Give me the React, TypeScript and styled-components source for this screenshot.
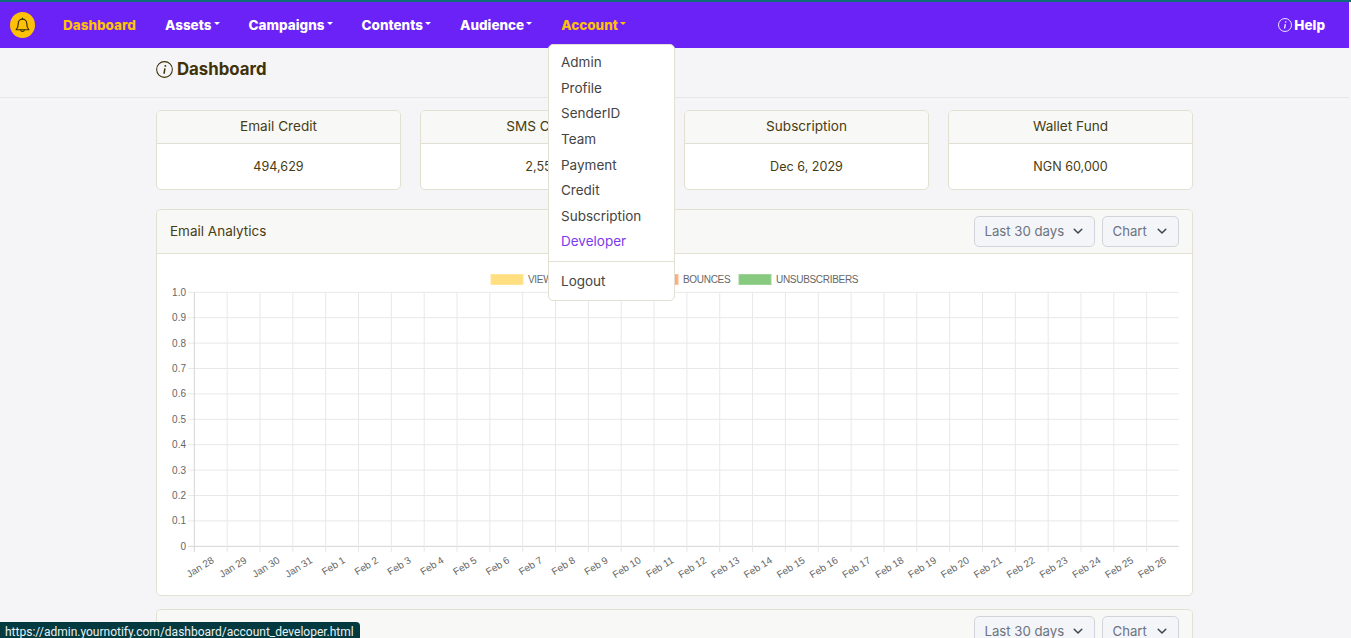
import React from "react";

import styled, { createGlobalStyle } from "styled-components";

const GlobalStyle = createGlobalStyle`
  html, body {
    margin: 0;
    height: 100%;
    overflow: hidden;
    background: #f5f5f7;
  }
  body {
    font-family: Inter, "Noto Sans", sans-serif;
    color: #483c12;
  }
  * {
    box-sizing: border-box;
  }
`;

const Page = styled.div`
  position: relative;
  width: 1351px;
  height: 638px;
  overflow: hidden;
  border-top: 2px solid #0f6d77;
`;

const Shell = styled.div`
  width: 1349px;
`;

const Navbar = styled.nav`
  display: flex;
  align-items: center;
  height: 46px;
  padding: 0 24px 0 10px;
  background: #6a22f6;
`;

const Logo = styled.div`
  display: flex;
  align-items: center;
  justify-content: center;
  width: 25px;
  height: 26px;
  margin-right: 28px;
  border-radius: 50%;
  background: #ffc107;
  color: #3a3000;
`;

const NavList = styled.div`
  display: flex;
  align-items: center;
  gap: 29px;
  flex: 1;
`;

const NavLink = styled.a<{ $active?: boolean; $caret?: boolean }>`
  display: inline-flex;
  align-items: center;
  font-size: 13.5px;
  font-weight: 800;
  color: ${(p) => (p.$active ? "#ffc107" : "#fff")};
  &:after {
    content: "";
    display: ${(p) => (p.$caret ? "inline-block" : "none")};
    margin-left: 2px;
    margin-bottom: 3px;
    border-top: 3px solid currentColor;
    border-left: 3px solid transparent;
    border-right: 3px solid transparent;
  }
`;

const HelpLink = styled.a`
  display: inline-flex;
  align-items: center;
  gap: 2px;
  font-size: 13.5px;
  font-weight: 800;
  color: #fff;
`;

const PageHead = styled.div`
  display: flex;
  align-items: center;
  gap: 4px;
  height: 50px;
  padding: 0 0 7px 156px;
  border-bottom: 1px solid #e6e6e6;
`;

const PageTitle = styled.h1`
  margin: 0;
  font-size: 16.8px;
  font-weight: 700;
  color: #3f3208;
`;

const Content = styled.main`
  width: 1037px;
  margin-left: 156px;
  padding-top: 12px;
`;

const StatGrid = styled.div`
  display: grid;
  grid-template-columns: repeat(4, 245px);
  gap: 19px;
  margin-bottom: 19px;
`;

const Card = styled.section`
  background: #fff;
  border: 1px solid #e2e0d2;
  border-radius: 5px;
  overflow: hidden;
`;

const StatHeader = styled.div`
  display: flex;
  align-items: center;
  justify-content: center;
  height: 33px;
  padding-bottom: 2px;
  background: #f8f8f6;
  border-bottom: 1px solid #e2e0d2;
  font-size: 13.6px;
`;

const StatValue = styled.div`
  display: flex;
  align-items: center;
  justify-content: center;
  height: 45px;
  font-size: 12.6px;
`;

const ChartCard = styled(Card)`
  margin-bottom: 13px;
`;

const ChartHeader = styled.div`
  display: flex;
  align-items: center;
  justify-content: space-between;
  height: 44px;
  padding: 0 13px;
  background: #f8f8f6;
  border-bottom: 1px solid #e2e0d2;
`;

const ChartTitle = styled.h2`
  margin: 0 0 2px;
  font-size: 13.5px;
  font-weight: 400;
`;

const Controls = styled.div`
  display: flex;
  gap: 7px;
`;

const Select = styled.div<{ $width: number }>`
  display: flex;
  align-items: center;
  justify-content: space-between;
  width: ${(p) => p.$width}px;
  height: 31px;
  padding: 0 10px 1px 9.5px;
  background: #f4f5f8;
  border: 1px solid #d1d5db;
  border-radius: 5px;
  font-size: 13.2px;
  color: #6b7280;
  svg {
    color: #3f4652;
  }
`;

const ChartBody = styled.div`
  height: 341px;
  svg {
    display: block;
  }
`;

const Menu = styled.div`
  position: absolute;
  left: 547.5px;
  top: 42px;
  width: 127px;
  height: 257px;
  padding: 4.5px 0;
  background: #fff;
  border: 1px solid #e2e0d2;
  border-radius: 5px;
`;

const MenuItem = styled.a<{ $current?: boolean }>`
  display: flex;
  align-items: center;
  height: 25.6px;
  padding-left: 12.5px;
  font-size: 13.5px;
  color: ${(p) => (p.$current ? "#7c3aed" : "#444")};
`;

const MenuDivider = styled.div`
  height: 1px;
  margin: 6.5px 0;
  background: #e2e0d2;
`;

const StatusBar = styled.div`
  position: absolute;
  left: 0;
  bottom: -3px;
  height: 19px;
  padding: 1px 6px 0 5px;
  background: #033a40;
  border-top-right-radius: 4px;
  font-family: Roboto, sans-serif;
  font-size: 12px;
  line-height: 18px;
  color: #e8f0f0;
  white-space: nowrap;
`;

const ChartText = styled.text`
  font-family: "Liberation Sans", Arial, sans-serif;
  font-size: 10px;
  fill: #666;
`;

const LegendText = styled(ChartText)`
  letter-spacing: -0.3px;
`;

const InfoIcon = ({ size, color }: { size: number; color: string }) => (
  <svg width={size} height={size} viewBox="0 0 16 16" fill="none">
    <circle cx="8" cy="8" r="7.4" stroke={color} strokeWidth="1" />
    <path d="M8.4 7 7.5 12" stroke={color} strokeWidth="1.4" />
    <circle cx="8.8" cy="4.6" r="0.9" fill={color} />
  </svg>
);

const BellIcon = () => (
  <svg
    width="17"
    height="17"
    viewBox="0 0 24 24"
    fill="none"
    stroke="currentColor"
    strokeWidth="1.7"
    strokeLinecap="round"
    strokeLinejoin="round"
  >
    <path d="M12 3a6 6 0 0 0-6 6c0 6-2.5 8-3 9h18c-.5-1-3-3-3-9a6 6 0 0 0-6-6Z" />
    <path d="M12 1.5V3" />
    <path d="M9.5 18a2.5 2.5 0 0 0 5 0" />
  </svg>
);

const Chevron = () => (
  <svg
    width="12"
    height="12"
    viewBox="0 0 12 12"
    fill="none"
    stroke="currentColor"
    strokeWidth="1.5"
    strokeLinecap="round"
    strokeLinejoin="round"
  >
    <path d="M2.2 4.2 6 8l3.8-3.8" />
  </svg>
);

const days = [
  "Jan 28",
  "Jan 29",
  "Jan 30",
  "Jan 31",
  ...Array.from({ length: 26 }, (_, i) => `Feb ${i + 1}`),
];

const yTicks = ["1.0", "0.9", "0.8", "0.7", "0.6", "0.5", "0.4", "0.3", "0.2", "0.1", "0"];

const legend = [
  { label: "VIEWS", x: 491, fill: "#ffdf80", stroke: "#ffe49a" },
  { label: "CLICKS", x: 570, fill: "#8fc7f0", stroke: "#a5d3f3" },
  { label: "BOUNCES", x: 646, fill: "#ffab78", stroke: "#ffbb94" },
  { label: "UNSUBSCRIBERS", x: 739, fill: "#86c97f", stroke: "#9cd496" },
];

const LEFT = 194.3;
const RIGHT = 1178.8;
const TOP = 292.3;
const STEP_X = 32.84;
const STEP_Y = 25.4;

const AnalyticsChart = () => (
  <svg width="1035" height="341" viewBox="157 254 1035 341">
    {legend.map((item) => (
      <g key={item.label}>
        <rect x={item.x} y={274.5} width={32} height={10} fill={item.fill} stroke={item.stroke} />
        <LegendText x={item.x + 37} y={282.5}>
          {item.label}
        </LegendText>
      </g>
    ))}
    {yTicks.map((tick, i) => {
      const y = TOP + STEP_Y * i;
      return (
        <g key={tick}>
          <line x1={188} x2={RIGHT} y1={y} y2={y} stroke={tick === "0" ? "#d4d4d4" : "#e8e8e8"} />
          <ChartText x={186} y={y + 3.5} textAnchor="end">
            {tick}
          </ChartText>
        </g>
      );
    })}
    {days.map((day, i) => {
      const x = LEFT + STEP_X * i;
      const cx = x + STEP_X / 2 + 4;
      return (
        <g key={day}>
          <line x1={x} x2={x} y1={TOP} y2={552} stroke={i === 0 ? "#d4d4d4" : "#e8e8e8"} />
          <ChartText
            x={cx}
            y={562}
            textAnchor="end"
            transform={`rotate(-32 ${cx} 562)`}
          >
            {day}
          </ChartText>
        </g>
      );
    })}
  </svg>
);

const stats = [
  { title: "Email Credit", value: "494,629" },
  { title: "SMS Credit", value: "2,550" },
  { title: "Subscription", value: "Dec 6, 2029" },
  { title: "Wallet Fund", value: "NGN 60,000" },
];

const menuItems = ["Admin", "Profile", "SenderID", "Team", "Payment", "Credit", "Subscription"];

const CardControls = () => (
  <Controls>
    <Select $width={121}>
      Last 30 days
      <Chevron />
    </Select>
    <Select $width={77}>
      Chart
      <Chevron />
    </Select>
  </Controls>
);

const App = () => {
  return (
    <Page>
      <GlobalStyle />
      <Shell>
        <Navbar>
          <Logo>
            <BellIcon />
          </Logo>
          <NavList>
            <NavLink $active>Dashboard</NavLink>
            <NavLink $caret>Assets</NavLink>
            <NavLink $caret>Campaigns</NavLink>
            <NavLink $caret>Contents</NavLink>
            <NavLink $caret>Audience</NavLink>
            <NavLink $caret $active>
              Account
            </NavLink>
          </NavList>
          <HelpLink>
            <InfoIcon size={14} color="#fff" />
            Help
          </HelpLink>
        </Navbar>
        <PageHead>
          <InfoIcon size={17} color="#3f3208" />
          <PageTitle>Dashboard</PageTitle>
        </PageHead>
        <Content>
          <StatGrid>
            {stats.map((stat) => (
              <Card key={stat.title}>
                <StatHeader>{stat.title}</StatHeader>
                <StatValue>{stat.value}</StatValue>
              </Card>
            ))}
          </StatGrid>
          <ChartCard>
            <ChartHeader>
              <ChartTitle>Email Analytics</ChartTitle>
              <CardControls />
            </ChartHeader>
            <ChartBody>
              <AnalyticsChart />
            </ChartBody>
          </ChartCard>
          <ChartCard>
            <ChartHeader>
              <span />
              <CardControls />
            </ChartHeader>
          </ChartCard>
        </Content>
      </Shell>
      <Menu>
        {menuItems.map((item) => (
          <MenuItem key={item}>{item}</MenuItem>
        ))}
        <MenuItem $current>Developer</MenuItem>
        <MenuDivider />
        <MenuItem>Logout</MenuItem>
      </Menu>
      <StatusBar>https://admin.yournotify.com/dashboard/account_developer.html</StatusBar>
    </Page>
  );
};

export default App;
